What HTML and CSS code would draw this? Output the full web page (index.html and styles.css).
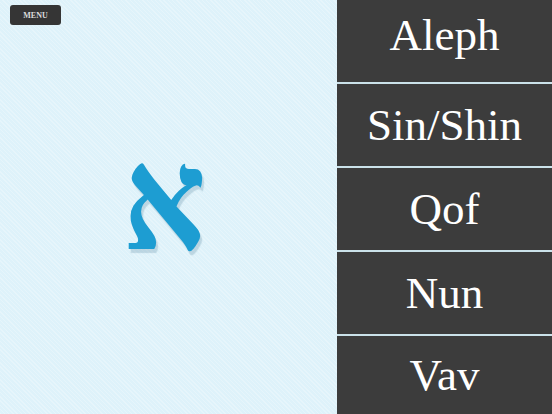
FILE: index.html
```html
<!DOCTYPE html>
<html>
<head>
<meta charset="utf-8">
<link rel="stylesheet" href="styles.css">
</head>
<body>
<div class="app">
  <main class="stage">
    <button class="menu-btn">MENU</button>
    <div class="letter">א</div>
  </main>
  <nav class="choices">
    <div class="choice choice--first">Aleph</div>
    <div class="choice">Sin/Shin</div>
    <div class="choice">Qof</div>
    <div class="choice">Nun</div>
    <div class="choice">Vav</div>
  </nav>
</div>
</body>
</html>
```
FILE: styles.css
```css
html, body {
  margin: 0;
  padding: 0;
  width: 552px;
  height: 414px;
  overflow: hidden;
}
.app {
  display: flex;
  width: 552px;
  height: 414px;
}
.stage {
  position: relative;
  flex: 1;
  display: flex;
  align-items: center;
  justify-content: center;
  background-color: #def2fa;
  background-image: repeating-linear-gradient(45deg, rgba(255,255,255,0.25) 0 1px, transparent 1px 3px);
}
.menu-btn {
  position: absolute;
  left: 10px;
  top: 5px;
  width: 51px;
  height: 20px;
  padding: 0;
  border: none;
  border-radius: 3px;
  background: #353535;
  color: #dcdcdc;
  font-family: "Liberation Serif", serif;
  font-size: 8px;
  font-weight: bold;
}
.letter {
  font-family: "Liberation Serif", serif;
  font-weight: bold;
  font-size: 130px;
  line-height: 1;
  color: #1d9dd2;
  text-shadow: 2px 3px 1px rgba(120, 160, 180, 0.35);
  transform: translate(-4px, -6px) scaleY(1.12);
}
.choices {
  width: 215px;
  display: grid;
  grid-template-rows: repeat(4, 82px) 1fr;
  row-gap: 2px;
  background: #cbe2ea;
}
.choice {
  box-sizing: border-box;
  display: flex;
  align-items: center;
  justify-content: center;
  background: #3c3c3c;
  color: #ffffff;
  font-family: "Liberation Serif", serif;
  font-size: 45px;
  line-height: 50px;
}
.choice--first {
  padding-bottom: 12px;
}
```
